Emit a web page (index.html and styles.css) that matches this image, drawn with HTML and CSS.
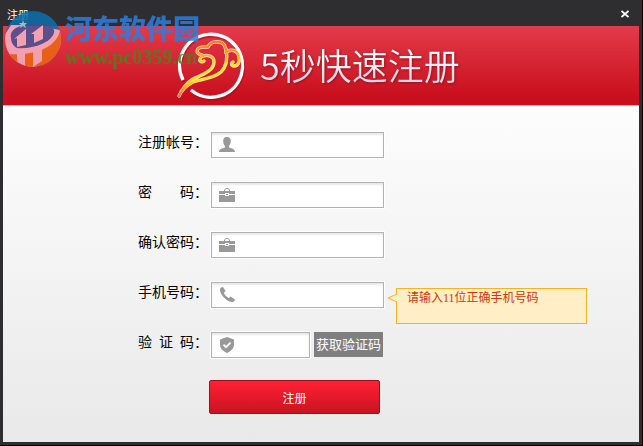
FILE: index.html
```html
<!DOCTYPE html>
<html lang="zh-CN">
  <head>
    <meta charset="UTF-8" />
    <meta name="viewport" content="width=device-width, initial-scale=1.0" />
    <title>注册</title>
    <link rel="stylesheet" href="styles.css">
  </head>
  <body>
    <div class="window">
      <div class="titlebar">
        <span>注册</span>
        <button type="button" class="close" aria-label="关闭">
          <svg width="8" height="8" viewBox="0 0 8 8"><path d="M.5 1l7 6M7.500 1L.5 7" stroke="#fff" stroke-width="1.700" /></svg>
        </button>
      </div>

      <div class="banner">
        <svg class="logo" width="70" height="70" viewBox="0 0 70 70" fill="none">
          <defs>
            <linearGradient id="gold" gradientUnits="userSpaceOnUse" x1="0" y1="10" x2="0" y2="66">
              <stop offset="0" stop-color="#f07a1c" />
              <stop offset=".2" stop-color="#fa9a1c" />
              <stop offset=".45" stop-color="#fff000" />
              <stop offset=".7" stop-color="#ffe010" />
              <stop offset="1" stop-color="#f0602c" />
            </linearGradient>
          </defs>
          <path d="M7 50A31.500 31.500 0 1 1 15 60" stroke="#8d0d1b" stroke-opacity=".5" stroke-width="3" transform="translate(1 1)" />
          <path d="M7 49A31.500 31.500 0 1 1 15 59" stroke="#fff" stroke-width="3.400" />
          <g stroke-linecap="round" stroke-linejoin="round">
            <g stroke="#ffe0c8" stroke-width="3.400">
              <path d="M26 24c-7-1-7-8 3-8h3c3-7 15-7 17 0c1 2 1 4 1 6c4-5 12-3 13 4c1 5-1 9-5 9c-3 0-3-3-1-4" />
              <path d="M28 30c-2 2-5 0-4-2c2-5 14-5 14 3c0 9-12 13-21 17c-6 4-10 8-14 17c3-7 8-11 14-14c7-3 20-3 28-10c6-6 7-13 5-23" />
            </g>
            <g stroke="url(#gold)" stroke-width="2">
              <path d="M26 24c-7-1-7-8 3-8h3c3-7 15-7 17 0c1 2 1 4 1 6c4-5 12-3 13 4c1 5-1 9-5 9c-3 0-3-3-1-4" />
              <path d="M28 30c-2 2-5 0-4-2c2-5 14-5 14 3c0 9-12 13-21 17c-6 4-10 8-14 17c3-7 8-11 14-14c7-3 20-3 28-10c6-6 7-13 5-23" />
            </g>
          </g>
        </svg>
        <h1>5秒快速注册</h1>
      </div>

      <form class="form">
        <div class="row">
          <label for="account"><span>注册帐号</span>：</label>
          <div class="field">
            <svg width="18" height="18" viewBox="0 0 18 18"><path d="M9 1c3 0 4.200 2 3.700 5c-.3 2-1 3.200-1.700 4v1.500c3 1 6 1.500 6 4.500H1c0-3 3-3.500 6-4.500V10C6 9 5.500 8 5.300 6C4.900 3 6 1 9 1z" /></svg>
            <input type="text" id="account" name="account">
          </div>
        </div>
        <div class="row">
          <label for="password"><span>密 码</span>：</label>
          <div class="field">
            <svg width="18" height="18" viewBox="0 0 18 18"><path d="M6 5V4l2-2h2l2 2v1h5v3h-6V7H7v1H1V5zm1 0h4V4l-1-1H8L7 4zM1 9h6v1h4V9h6v7H1zM8 8h2v1H8z" /></svg>
            <input type="password" id="password" name="password">
          </div>
        </div>
        <div class="row">
          <label for="confirm"><span>确认密码</span>：</label>
          <div class="field">
            <svg width="18" height="18" viewBox="0 0 18 18"><path d="M6 5V4l2-2h2l2 2v1h5v3h-6V7H7v1H1V5zm1 0h4V4l-1-1H8L7 4zM1 9h6v1h4V9h6v7H1zM8 8h2v1H8z" /></svg>
            <input type="password" id="confirm" name="confirm">
          </div>
        </div>
        <div class="row">
          <label for="phone"><span>手机号码</span>：</label>
          <div class="field">
            <svg width="18" height="18" viewBox="0 0 18 18"><path d="M3 1.500L5 1l2.500 4L5.800 7c1 2 3 4 5 5l1.800-1.400L17 13.500c-.3 1.800-1.500 2.800-3.500 2.500C8 15 2.500 9 2 4.500C1.900 3 2.200 2 3 1.500z" /></svg>
            <input type="text" id="phone" name="phone" aria-describedby="phone-tip">
            <div class="tip" id="phone-tip">
              <svg class="tip-arrow" width="10" height="10" viewBox="0 0 10 10"><path d="M10 1L1 5l9 4" fill="#ffeec6" stroke="#f5b324" /></svg>
              请输入<span class="num">11</span>位正确手机号码
            </div>
          </div>
        </div>
        <div class="row">
          <label for="code"><span>验 证 码</span>：</label>
          <div class="field field-code">
            <svg width="18" height="18" viewBox="0 0 18 18"><path d="M9 1l7 2.500v5c0 4-3 6.500-7 8.500c-4-2-7-4.500-7-8.500v-5z" /><path d="M5.500 8.700l2.500 2.500l4.500-4.500" fill="none" stroke="#fff" stroke-width="1.800" /></svg>
            <input type="text" id="code" name="code">
          </div>
          <button type="button" class="get-code">获取验证码</button>
        </div>
        <button type="submit" class="submit">注册</button>
      </form>
    </div>

    <div class="watermark">
      <svg width="58" height="58" viewBox="0 0 58 58">
        <defs>
          <clipPath id="disc"><circle cx="29" cy="29" r="28" /></clipPath>
        </defs>
        <g clip-path="url(#disc)">
          <path d="M0 0h58v58H0z" fill="#0d6fac" />
          <path d="M0 26L7 15L29 15L56 20L58 38L30 58H0z" fill="#f8b4c4" />
          <path d="M7 28C5 17 20 14 31 14c13 0 21 3 19 9C46 34 29 39 15 39C10 37 7 33 7 28z" fill="#46549b" />
          <path d="M10 29l12-10v16l-9 2v-9zM27 24l12-9v14l-9 4v-9z" fill="#f8b4c4" />
          <path d="M4 42c22 3 42-7 54-23v39H10z" fill="#ef6813" />
          <path d="M2 36c19 6 42 0 54-16c-2 14-19 26-51 24z" fill="#f8b4c4" />
          <path d="M13 42h8v14l-8-4zM29 41l9-4v14l-9 6z" fill="#f8b4c4" />
          <path d="M19 10l1 3h3l-2 2l1 3l-3-2l-3 2l1-3l-2-2h3z" fill="#a9d4ea" />
        </g>
      </svg>
      <div class="watermark-text">
        <div class="site-name">河东软件园</div>
        <div class="site-url">www.pc0359.cn</div>
      </div>
    </div>
  </body>
</html>
```
FILE: styles.css
```css
* {
  box-sizing: border-box;
}

body {
  margin: 0;
  min-height: 100vh;
  display: flex;
  background-color: #000;
  font-family: "Liberation Sans", "Noto Sans CJK SC", sans-serif;
  font-size: 14px;
  color: #000;
}

button {
  font-family: inherit;
  padding: 0;
  cursor: pointer;
}

.window {
  flex: 1;
  display: flex;
  flex-direction: column;
  margin: 0 1px 1px 0;
  padding: 0 3px 3px;
  background-color: #2e2e30;
}

.titlebar {
  display: flex;
  justify-content: space-between;
  align-items: center;
  height: 26px;
  padding: 2px 10px 0 4px;
  color: #fff;
  font-size: 11px;
}

.close {
  display: flex;
  border: none;
  background: none;
}

.banner {
  display: flex;
  align-items: center;
  height: 80px;
  padding-left: 173px;
  background: linear-gradient(#e33b4a, #c90f1d 90%);
  border-bottom: 1px solid #f3a5aa;
}

h1 {
  margin: 0 0 4px 14px;
  font-family: "Noto Sans CJK SC", sans-serif;
  font-size: 36px;
  line-height: 48px;
  font-weight: 350;
  background: linear-gradient(#fff 35%, #d5dce8 80%);
  background-clip: text;
  color: transparent;
  filter: drop-shadow(1px 1px 1px #9c101c);
}

.form {
  flex: 1;
  display: flex;
  flex-direction: column;
  gap: 24px;
  padding: 26px 0 0 135px;
  background: linear-gradient(#fdfdfd, #e9e9e9);
}

.row {
  display: flex;
  height: 26px;
}

label {
  display: flex;
  width: 73px;
  line-height: 20px;
}

label span {
  width: 56px;
  text-align: justify;
  text-align-last: justify;
}

.field {
  position: relative;
  display: flex;
  align-items: center;
  width: 173px;
  padding-left: 6px;
  background-color: #fff;
  border: 1px solid #b2b2b2;
  box-shadow: 0 0 0 1px #fff, inset 0 2px 2px #e8e8e8;
}

.field svg {
  flex: none;
  fill: #999;
}

.field input {
  flex: 1;
  min-width: 0;
  padding: 0 6px;
  border: none;
  outline: none;
  background: none;
  font-size: 14px;
}

.field-code {
  width: 99px;
}

.get-code {
  width: 69px;
  height: 25px;
  margin-left: 4px;
  padding-bottom: 2px;
  border: none;
  background-color: #7f7f7f;
  color: #fff;
  font-size: 13px;
}

.submit {
  width: 171px;
  height: 34px;
  margin: -2px 0 0 71px;
  border: 1px solid #9c101c;
  border-radius: 2px;
  background: linear-gradient(#ff2033, #c91421);
  color: #fff;
  font-size: 12px;
}

.tip {
  position: absolute;
  top: 5px;
  left: 184px;
  width: 191px;
  height: 36px;
  padding-left: 10px;
  background-color: #ffeec6;
  border: 1px solid #f5b324;
  color: #d03800;
  font-size: 12px;
  line-height: 18px;
}

.tip-arrow {
  position: absolute;
  top: 4px;
  left: -10px;
}

.num {
  font-family: "Liberation Serif", serif;
}

/* site mark over the top left corner */
.watermark {
  position: absolute;
  top: 10px;
  left: 4px;
  display: flex;
  opacity: 0.85;
  pointer-events: none;
}

.watermark-text {
  margin-left: 3px;
}

.site-name {
  color: #2a7ee0;
  font-family: "Noto Sans CJK SC", sans-serif;
  font-size: 27px;
  line-height: 36px;
  font-weight: 900;
}

.site-url {
  color: #4a841c;
  font-family: "Liberation Serif", serif;
  font-size: 20px;
  line-height: 22px;
  font-weight: bold;
}
```
